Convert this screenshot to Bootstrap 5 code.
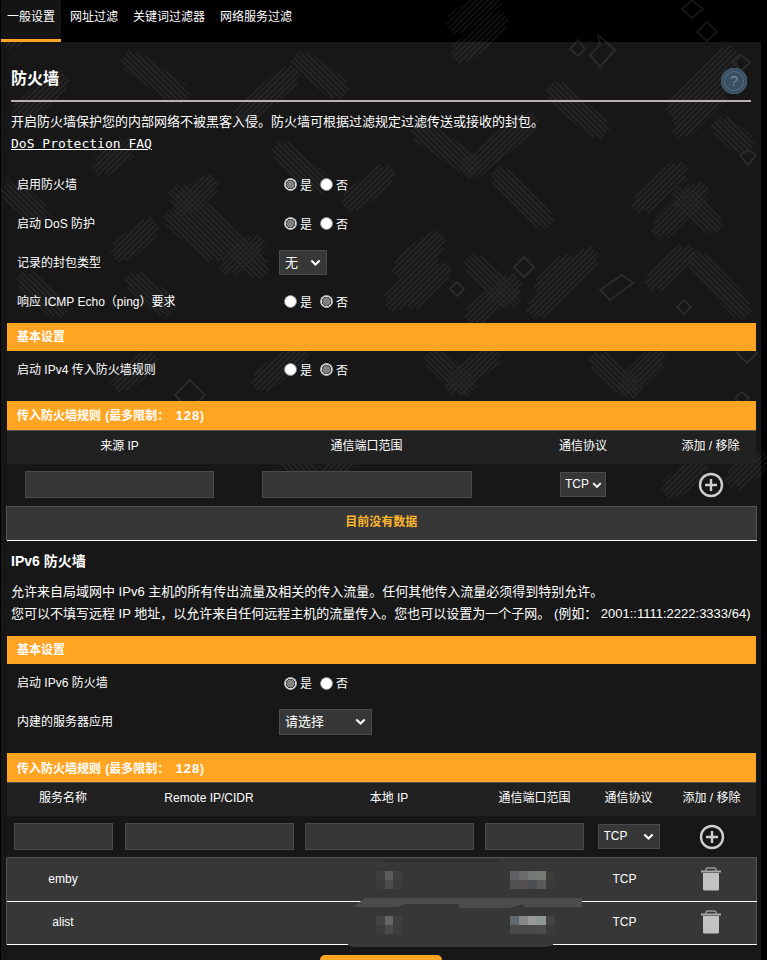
<!DOCTYPE html>
<html lang="zh-CN">
<head>
    <meta charset="UTF-8">
    <meta name="viewport" content="width=device-width, initial-scale=1.0">
    <title>防火墙</title>
    <link href="https://cdn.jsdelivr.net/npm/bootstrap@5.3.0/dist/css/bootstrap.min.css" rel="stylesheet">
    <style>
        html, body { height: 960px; overflow: hidden; background: #000; }
        body { font-family: "Liberation Sans", "Noto Sans CJK SC", sans-serif; font-size: 12px; color: #fff; }
        .fw-page { position: relative; width: 767px; height: 960px; overflow: hidden; background: #000; }
        .fw-art { position: absolute; left: 0; top: 0; }
        .fw-tabs { position: relative; height: 42px; padding-left: 1px; gap: 3px; }
        .fw-tabs .nav-link { height: 42px; padding: 10px 6px 0; color: #fff; font-size: 12px; line-height: 15px; border-bottom: 3px solid transparent; }
        .fw-tabs .nav-link.active { background: #141414; border-bottom-color: #ffa523; }
        .fw-panel { position: relative; width: 760px; height: 918px; margin-left: 1px; background: rgba(255, 255, 255, .09); }
        .fw-head { height: 58px; padding: 24px 5px 0 10px; }
        .fw-title { font-size: 16px; line-height: 26px; font-weight: 700; margin: 0; }
        .fw-help { width: 26px; height: 26px; margin: 2px 9px 0 0; border-radius: 50%; background: #3a4f61; box-shadow: inset 0 0 0 1px #45596b, inset 0 0 0 3px #3a4f61, inset 0 0 0 4px #526b7e; }
        .fw-help span { color: #71899a; font-size: 15px; line-height: 26px; }
        .fw-rule { width: 740px; height: 2px; margin: 0 0 0 10px; background: #bcb0b0; opacity: 1; border: 0; }
        .fw-text { font-size: 13px; line-height: 22px; margin: 0 0 0 10px; white-space: nowrap; }
        .fw-desc { margin-top: 9px; }
        .fw-faq { display: block; margin-left: 10px; font-family: "DejaVu Sans Mono", monospace; font-size: 13px; line-height: 22px; color: #fff; }
        .fw-rows { margin-top: 10px; }
        .fw-row { height: 39px; padding-left: 16px; }
        .fw-row-short { height: 37px; }
        .fw-row-v6 { padding-top: 2px; }
        .fw-row-tall { height: 40px; padding-top: 2px; }
        .fw-label { width: 262px; font-size: 12px; }
        .fw-yesno { padding-left: 5px; gap: 3px; font-size: 12px; line-height: 14px; }
        .fw-yesno label { margin-right: 5px; padding-top: 2px; }
        .fw-radio { width: 13px; height: 13px; margin: 0; border: 1px solid #8a8a8a; background-color: #fff; background-image: none; }
        .fw-radio:checked { background-color: #e0e0e0; border-color: #b0b0b0; background-image: radial-gradient(circle, #808080 0 3.8px, #3a3a3a 4.2px 4.6px, #e0e0e0 5px); }
        .fw-select { display: block; height: 25px; padding: 0 0 0 5px; font-size: 13px; line-height: 23px; color: #fff; background-color: #373737; border: 1px solid #4a4a4a; border-radius: 0; background-size: 11px 11px; background-position: right 5px center;
            background-image: url("data:image/svg+xml,%3csvg xmlns='http://www.w3.org/2000/svg' viewBox='0 0 16 16'%3e%3cpath fill='none' stroke='%23fff' stroke-width='3' d='M2 5l6 6 6-6'/%3e%3c/svg%3e"); font-family: inherit; }
        .fw-sel-none { width: 48px; }
        .fw-sel-app { width: 93px; height: 26px; }
        .fw-sel-tcp { width: 46px; font-size: 12px; margin: 0 auto; padding-left: 4px; background-size: 10px 10px; background-position: right 3px center; }
        .fw-sel-tcp2 { width: 62px; font-size: 12px; margin: 0 auto; }
        .fw-band { width: 749px; height: 28px; margin-left: 6px; padding-left: 10px; background: #ffa523; font-size: 12px; font-weight: 700; line-height: 29px; }
        .fw-band-rules { height: 30px; border-bottom: 1px solid #555; word-spacing: 1px; }
        .fw-band-low { line-height: 31px; }
        .fw-count { font-size: 13px; letter-spacing: .9px; margin-left: 2px; }
        .fw-gap-2 { margin-top: 2px; }
        .fw-gap-11 { margin-top: 11px; }
        .fw-gap-12 { margin-top: 12px; }
        .fw-gap-13 { margin-top: 13px; }
        .fw-table { width: 749px; margin-left: 6px; table-layout: fixed; --bs-table-bg: transparent; --bs-table-color: #fff; font-size: 12px; }
        .fw-table > thead > tr > th { height: 33px; padding: 0 0 4px; background: #212121; font-weight: 400; text-align: center; vertical-align: middle; color: #fff; }
        .fw-cols-b > thead > tr > th { padding-bottom: 2px; }
        .fw-table > tbody > tr > td { padding: 0; text-align: center; vertical-align: middle; color: #fff; }
        .fw-table .fw-input-row > td { height: 42px; }
        .fw-table > tbody > tr > .fw-plus-low { padding-top: 2px; }
        .fw-table > tbody > .fw-data > td { height: 44px; padding-bottom: 3px; background: #373737; border-bottom: 1px solid #fff; }
        .fw-table .fw-data > td:first-child { box-shadow: -1px 0 0 #555; }
        .fw-table .fw-data > td:last-child { border-right: 1px solid #555; }
        .fw-table > tbody > .fw-data-first > td { padding-bottom: 1px; border-top: 1px solid #555; }
        .fw-table > tbody > .fw-data-2 > td { height: 43px; }
        .fw-table > tbody > tr > .fw-proto { padding-right: 8px; }
        .fw-table > tbody > tr > .fw-empty { height: 34px; padding-bottom: 2px; background: #373737; color: #ffb52e; font-weight: 700; border-top: 1px solid #555; border-right: 1px solid #555; border-bottom: 1px solid #fff; box-shadow: -1px 0 0 #555; }
        .fw-cols-a col:nth-child(1) { width: 225px; }
        .fw-cols-a col:nth-child(2) { width: 269px; }
        .fw-cols-a col:nth-child(3) { width: 164px; }
        .fw-cols-a col:nth-child(4) { width: 91px; }
        .fw-cols-b col:nth-child(1) { width: 112px; }
        .fw-cols-b col:nth-child(2) { width: 180px; }
        .fw-cols-b col:nth-child(3) { width: 180px; }
        .fw-cols-b col:nth-child(4) { width: 111px; }
        .fw-cols-b col:nth-child(5) { width: 77px; }
        .fw-cols-b col:nth-child(6) { width: 89px; }
        .fw-input { display: block; height: 27px; margin: 0 auto; padding: 0 4px; background: #373737; border: 1px solid #4a4a4a; border-radius: 0; color: #fff; }
        .fw-w99 { width: 99px; }
        .fw-w169 { width: 169px; }
        .fw-w189 { width: 189px; }
        .fw-w210 { width: 210px; }
        .fw-v6title { margin: 10px 0 0 10px; font-size: 14px; line-height: 20px; font-weight: 700; }
        .fw-v6desc { margin-top: 10px; }
        .fw-apply { display: block; width: 122px; height: 40px; margin: 10px 0 0 319px; padding: 0; background: #ffa523; border: 0; border-radius: 5px; }
        .fw-marks { position: absolute; left: 0; top: 0; pointer-events: none; }
    </style>
</head>
<body>
<div class="fw-page">
    <!-- background camo, stops around y=510 -->
    <svg class="fw-art" width="767" height="510" viewBox="0 0 767 510" fill="none" aria-hidden="true">
        <defs>
            <pattern id="hatchA" width="4" height="4" patternUnits="userSpaceOnUse" patternTransform="rotate(-45)"><rect width="4" height="2" fill="#101010"/></pattern>
            <pattern id="hatchB" width="4" height="4" patternUnits="userSpaceOnUse" patternTransform="rotate(45)"><rect width="4" height="2" fill="#101010"/></pattern>
            <path id="bandsA" d="M543 287L567 263M535 310L590 255M653 283L687 253M473 317L513 283M400 270L437 240M410 300L443 270M453 387L493 353M627 387L657 357M670 490L700 467M733 480L762 460M120 253L150 227M227 267L257 243M183 207L210 183M393 303L430 260M120 383L150 360M260 383L300 353M350 203L387 173M100 167L127 147M455 25L495 -5M460 55L500 20M470 170L530 120M640 205L680 170M660 230L700 190M675 110L730 55M680 130L720 90M10 40L40 10M20 115L60 80M240 120L290 75M330 470L370 440"/>
            <path id="bandsB" d="M697 260L743 310M473 263L513 300M433 357L467 387M597 360L633 390M173 217L217 253M230 240L260 270M133 280L167 307M555 90L600 130M420 130L470 165M500 175L545 220M680 195L715 225M10 190L40 215M177 193L233 240M280 150L320 185M720 125L745 145M25 280L60 310M130 60L180 95M300 60L340 90M260 440L310 470"/>
        </defs>
        <g stroke="url(#hatchA)">
            <use href="#bandsA" stroke-width="24"/>
            <use href="#bandsA" stroke-width="14" stroke-linecap="square"/>
        </g>
        <g stroke="url(#hatchB)">
            <use href="#bandsB" stroke-width="24"/>
            <use href="#bandsB" stroke-width="14" stroke-linecap="square"/>
        </g>
        <g stroke="#161616" stroke-width="2">
            <path d="M524 257L534 267L524 277L514 267ZM457 282L464 289L457 296L450 289ZM684 300L691 307L684 314L677 307ZM622 275L633 283L610 300L600 290Z"/>
            <path d="M747 345L757 353L747 363L737 353ZM742 392L749 398L742 405L735 398ZM692 0L703 9L692 18L682 9ZM707 22L717 32L707 41L697 32ZM741 55L750 62L741 71L733 62Z"/>
            <path d="M578 40L585 49L578 56L570 49ZM598 35L615 50L600 67L590 55L600 45ZM748 150L756 155L748 165L740 155ZM190 380L205 395L190 410L175 395Z"/>
        </g>
    </svg>

    <ul class="nav fw-tabs">
        <li class="nav-item"><a class="nav-link active" href="#">一般设置</a></li>
        <li class="nav-item"><a class="nav-link" href="#">网址过滤</a></li>
        <li class="nav-item"><a class="nav-link" href="#">关键词过滤器</a></li>
        <li class="nav-item"><a class="nav-link" href="#">网络服务过滤</a></li>
    </ul>

    <div class="fw-panel">
        <div class="fw-head d-flex justify-content-between">
            <h1 class="fw-title">防火墙</h1>
            <div class="fw-help text-center"><span>?</span></div>
        </div>
        <hr class="fw-rule">
        <p class="fw-text fw-desc">开启防火墙保护您的内部网络不被黑客入侵。防火墙可根据过滤规定过滤传送或接收的封包。</p>
        <a class="fw-faq" href="#">DoS Protection FAQ</a>

        <div class="fw-rows">
            <div class="fw-row d-flex align-items-center">
                <div class="fw-label">启用防火墙</div>
                <div class="fw-yesno d-flex align-items-center">
                    <input class="form-check-input fw-radio" type="radio" name="r1" id="r1y" checked><label for="r1y">是</label>
                    <input class="form-check-input fw-radio" type="radio" name="r1" id="r1n"><label for="r1n">否</label>
                </div>
            </div>
            <div class="fw-row d-flex align-items-center">
                <div class="fw-label">启动 DoS 防护</div>
                <div class="fw-yesno d-flex align-items-center">
                    <input class="form-check-input fw-radio" type="radio" name="r2" id="r2y" checked><label for="r2y">是</label>
                    <input class="form-check-input fw-radio" type="radio" name="r2" id="r2n"><label for="r2n">否</label>
                </div>
            </div>
            <div class="fw-row d-flex align-items-center">
                <div class="fw-label">记录的封包类型</div>
                <select class="form-select fw-select fw-sel-none"><option>无</option></select>
            </div>
            <div class="fw-row d-flex align-items-center">
                <div class="fw-label">响应 ICMP Echo（ping）要求</div>
                <div class="fw-yesno d-flex align-items-center">
                    <input class="form-check-input fw-radio" type="radio" name="r3" id="r3y"><label for="r3y">是</label>
                    <input class="form-check-input fw-radio" type="radio" name="r3" id="r3n" checked><label for="r3n">否</label>
                </div>
            </div>
        </div>

        <div class="fw-band fw-gap-2">基本设置</div>
        <div class="fw-row fw-row-short d-flex align-items-center">
            <div class="fw-label">启动 IPv4 传入防火墙规则</div>
            <div class="fw-yesno d-flex align-items-center">
                <input class="form-check-input fw-radio" type="radio" name="r4" id="r4y"><label for="r4y">是</label>
                <input class="form-check-input fw-radio" type="radio" name="r4" id="r4n" checked><label for="r4n">否</label>
            </div>
        </div>

        <div class="fw-band fw-band-rules fw-gap-13">传入防火墙规则 (最多限制： <span class="fw-count">128</span>)</div>
        <table class="table table-borderless mb-0 fw-table fw-cols-a">
            <colgroup><col><col><col><col></colgroup>
            <thead>
                <tr><th>来源 IP</th><th>通信端口范围</th><th>通信协议</th><th>添加 / 移除</th></tr>
            </thead>
            <tbody>
                <tr class="fw-input-row">
                    <td><input class="fw-input fw-w189" type="text"></td>
                    <td><input class="fw-input fw-w210" type="text"></td>
                    <td><select class="form-select fw-select fw-sel-tcp"><option>TCP</option></select></td>
                    <td>
                        <svg width="26" height="26" viewBox="0 0 26 26" fill="none" stroke="#cfcfcf" stroke-width="2.4"><circle cx="13" cy="13" r="11"/><path d="M13 7v12M7 13h12"/></svg>
                    </td>
                </tr>
                <tr><td colspan="4" class="fw-empty">目前没有数据</td></tr>
            </tbody>
        </table>

        <div class="fw-v6title">IPv6 防火墙</div>
        <p class="fw-text fw-v6desc">允许来自局域网中 IPv6 主机的所有传出流量及相关的传入流量。任何其他传入流量必须得到特别允许。</p>
        <p class="fw-text">您可以不填写远程 IP 地址，以允许来自任何远程主机的流量传入。您也可以设置为一个子网。 (例如： 2001::1111:2222:3333/64)</p>

        <div class="fw-band fw-gap-11">基本设置</div>
        <div class="fw-row fw-row-short fw-row-v6 d-flex align-items-center">
            <div class="fw-label">启动 IPv6 防火墙</div>
            <div class="fw-yesno d-flex align-items-center">
                <input class="form-check-input fw-radio" type="radio" name="r5" id="r5y" checked><label for="r5y">是</label>
                <input class="form-check-input fw-radio" type="radio" name="r5" id="r5n"><label for="r5n">否</label>
            </div>
        </div>
        <div class="fw-row fw-row-tall d-flex align-items-center">
            <div class="fw-label">内建的服务器应用</div>
            <select class="form-select fw-select fw-sel-app"><option>请选择</option></select>
        </div>

        <div class="fw-band fw-band-rules fw-band-low fw-gap-12">传入防火墙规则 (最多限制： <span class="fw-count">128</span>)</div>
        <table class="table table-borderless mb-0 fw-table fw-cols-b">
            <colgroup><col><col><col><col><col><col></colgroup>
            <thead>
                <tr><th>服务名称</th><th>Remote IP/CIDR</th><th>本地 IP</th><th>通信端口范围</th><th>通信协议</th><th>添加 / 移除</th></tr>
            </thead>
            <tbody>
                <tr class="fw-input-row">
                    <td><input class="fw-input fw-w99" type="text"></td>
                    <td><input class="fw-input fw-w169" type="text"></td>
                    <td><input class="fw-input fw-w169" type="text"></td>
                    <td><input class="fw-input fw-w99" type="text"></td>
                    <td><select class="form-select fw-select fw-sel-tcp2"><option>TCP</option></select></td>
                    <td class="fw-plus-low">
                        <svg width="26" height="26" viewBox="0 0 26 26" fill="none" stroke="#cfcfcf" stroke-width="2.4"><circle cx="13" cy="13" r="11"/><path d="M13 7v12M7 13h12"/></svg>
                    </td>
                </tr>
                <tr class="fw-data fw-data-first">
                    <td>emby</td><td></td><td></td><td></td><td class="fw-proto">TCP</td>
                    <td>
                        <svg width="22" height="24" viewBox="0 0 22 24" fill="#c2c2c2"><path fill="none" stroke="#9a9a9a" stroke-width="1.4" d="M6 4V2.5Q6 1 7.5 1h7Q16 1 16 2.500V4"/><rect x="1" y="3.500" width="20" height="2" fill="#a8a8a8"/><path d="M3 6h16v16q0 1.500-1.500 1.500h-13Q3 23.500 3 22z"/></svg>
                    </td>
                </tr>
                <tr class="fw-data fw-data-2">
                    <td>alist</td><td></td><td></td><td></td><td class="fw-proto">TCP</td>
                    <td>
                        <svg width="22" height="24" viewBox="0 0 22 24" fill="#c2c2c2"><path fill="none" stroke="#9a9a9a" stroke-width="1.4" d="M6 4V2.5Q6 1 7.5 1h7Q16 1 16 2.500V4"/><rect x="1" y="3.500" width="20" height="2" fill="#a8a8a8"/><path d="M3 6h16v16q0 1.500-1.500 1.500h-13Q3 23.500 3 22z"/></svg>
                    </td>
                </tr>
            </tbody>
        </table>

        <button class="btn fw-apply" type="button" aria-label="应用"></button>
    </div>

    <!-- redaction smudges and pixel blocks sitting over the two data rows -->
    <svg class="fw-marks" width="767" height="960" viewBox="0 0 767 960" aria-hidden="true">
        <path d="M383 861H500" stroke="#2c2c2c" stroke-width="1.500"/>
        <path d="M353 907L365 898H582V907H525L523 904L510 908H459V904H405L398 907Z" fill="#4c4c4c"/>
        <path d="M348 940H553V945Q550 947 540 947H360Q350 947 348 945Z" fill="#383838"/>
        <g>
            <rect x="376" y="871" width="9" height="9" fill="#3e3e3e"/><rect x="385" y="871" width="8" height="9" fill="#5c5c5c"/><rect x="393" y="871" width="9" height="9" fill="#3e3e3e"/>
            <rect x="376" y="880" width="9" height="9" fill="#3c3c3c"/><rect x="385" y="880" width="8" height="9" fill="#4b4b4b"/><rect x="393" y="880" width="9" height="9" fill="#3c3c3c"/>
            <rect x="510" y="871" width="9" height="9" fill="#5e6264"/><rect x="519" y="871" width="9" height="9" fill="#6c6a68"/><rect x="528" y="871" width="9" height="9" fill="#727777"/><rect x="537" y="871" width="9" height="9" fill="#757a75"/><rect x="546" y="871" width="9" height="9" fill="#3d3c39"/>
            <rect x="510" y="880" width="9" height="9" fill="#4e5052"/><rect x="519" y="880" width="9" height="9" fill="#55504f"/><rect x="528" y="880" width="9" height="9" fill="#4d4e50"/><rect x="537" y="880" width="9" height="9" fill="#5a5a5a"/><rect x="546" y="880" width="9" height="9" fill="#3b3a38"/>
            <rect x="376" y="916" width="9" height="9" fill="#444"/><rect x="385" y="916" width="8" height="9" fill="#666"/><rect x="393" y="916" width="9" height="9" fill="#3e3e3e"/>
            <rect x="376" y="925" width="9" height="9" fill="#3d3d3d"/><rect x="385" y="925" width="8" height="9" fill="#4b4b4b"/><rect x="393" y="925" width="9" height="9" fill="#3d3d3d"/>
            <rect x="510" y="916" width="9" height="9" fill="#5f686c"/><rect x="519" y="916" width="9" height="9" fill="#8a8687"/><rect x="528" y="916" width="9" height="9" fill="#999b98"/><rect x="537" y="916" width="9" height="9" fill="#8e9796"/><rect x="546" y="916" width="9" height="9" fill="#4a4341"/>
            <rect x="510" y="925" width="9" height="9" fill="#4a4a4a"/><rect x="519" y="925" width="9" height="9" fill="#4a4a4a"/><rect x="528" y="925" width="9" height="9" fill="#4a4a4c"/><rect x="537" y="925" width="9" height="9" fill="#4c4c4c"/><rect x="546" y="925" width="9" height="9" fill="#3a3a3a"/>
        </g>
    </svg>
</div>
<script src="https://cdn.jsdelivr.net/npm/bootstrap@5.3.0/dist/js/bootstrap.bundle.min.js"></script>
</body>
</html>
